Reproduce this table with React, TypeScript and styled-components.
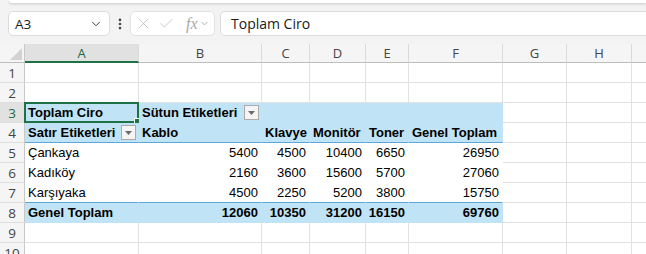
import React from 'react';
import styled, {createGlobalStyle} from 'styled-components';
import {ChevronDown, EllipsisVertical, X, Check} from 'lucide-react';

const GlobalStyle = createGlobalStyle`
  html, body {
    margin: 0;
    padding: 0;
    background: #f3f3f3;
    overflow: hidden;
  }
  body {
    font-family: "Liberation Sans", Arial, sans-serif;
  }
`;

type Cell = {
    text?: string;
    bold?: boolean;
    num?: boolean;
    filter?: boolean;
};

const COLS = ['A', 'B', 'C', 'D', 'E', 'F', 'G', 'H', 'I'];
const PIVOT_COLS = 6; // A..F

// rows 3..8 belong to the pivot table
const pivot: Record<number, { kind: 'head' | 'body' | 'total'; cells: Cell[] }> = {
    3: {kind: 'head', cells: [{text: 'Toplam Ciro', bold: true}, {text: 'Sütun Etiketleri', bold: true, filter: true}]},
    4: {
        kind: 'head', cells: [
            {text: 'Satır Etiketleri', bold: true, filter: true},
            {text: 'Kablo', bold: true},
            {text: 'Klavye', bold: true},
            {text: 'Monitör', bold: true},
            {text: 'Toner', bold: true},
            {text: 'Genel Toplam', bold: true},
        ]
    },
    5: {kind: 'body', cells: [{text: 'Çankaya'}, {text: '5400', num: true}, {text: '4500', num: true}, {text: '10400', num: true}, {text: '6650', num: true}, {text: '26950', num: true}]},
    6: {kind: 'body', cells: [{text: 'Kadıköy'}, {text: '2160', num: true}, {text: '3600', num: true}, {text: '15600', num: true}, {text: '5700', num: true}, {text: '27060', num: true}]},
    7: {kind: 'body', cells: [{text: 'Karşıyaka'}, {text: '4500', num: true}, {text: '2250', num: true}, {text: '5200', num: true}, {text: '3800', num: true}, {text: '15750', num: true}]},
    8: {kind: 'total', cells: [{text: 'Genel Toplam', bold: true}, {text: '12060', bold: true, num: true}, {text: '10350', bold: true, num: true}, {text: '31200', bold: true, num: true}, {text: '16150', bold: true, num: true}, {text: '69760', bold: true, num: true}]},
};

const App = () => {
    const rows = [1, 2, 3, 4, 5, 6, 7, 8, 9, 10];

    return (
        <Window>
            <GlobalStyle/>
            <RibbonEdge/>
            <FormulaBar>
                <NameBox>
                    <span>A3</span>
                    <ChevronDown size={14} strokeWidth={1.6} color="#333"/>
                </NameBox>
                <DotsSlot>
                    <EllipsisVertical size={14} strokeWidth={2.6} color="#444"/>
                </DotsSlot>
                <FxBox>
                    <X size={17} strokeWidth={1.1} color="#b9b9b9"/>
                    <Check size={17} strokeWidth={1.1} color="#b9b9b9"/>
                    <FxLabel>fx</FxLabel>
                    <ChevronDown size={11} strokeWidth={1.6} color="#9a9a9a"/>
                </FxBox>
                <FormulaInput>Toplam Ciro</FormulaInput>
            </FormulaBar>

            <Sheet>
                <Corner>
                    <svg width="12" height="12" viewBox="0 0 12 12">
                        <polygon points="12,0 12,12 0,12" fill="#d2d2d2"/>
                    </svg>
                </Corner>
                {COLS.map((c) => (
                    <ColHead key={c} $active={c === 'A'}>{c}</ColHead>
                ))}

                {rows.map((r) => {
                    const p = pivot[r];
                    return (
                        <React.Fragment key={r}>
                            <RowHead $active={r === 3}>{r}</RowHead>
                            {COLS.map((c, i) => {
                                const inPivot = !!p && i < PIVOT_COLS;
                                const cell = p && inPivot ? p.cells[i] : undefined;
                                return (
                                    <SheetCell
                                        key={c}
                                        $pivot={inPivot ? p.kind : undefined}
                                        $underline={inPivot && (r === 4 || r === 7)}
                                        $num={cell?.num}
                                        $bold={cell?.bold}
                                    >
                                        {cell?.text && <CellText>{cell.text}</CellText>}
                                        {cell?.filter && (
                                            <FilterButton>
                                                <svg width="7" height="4" viewBox="0 0 7 4">
                                                    <polygon points="0,0 7,0 3.5,4" fill="#6b6b6b"/>
                                                </svg>
                                            </FilterButton>
                                        )}
                                        {r === 3 && c === 'A' && (
                                            <Selection>
                                                <Handle/>
                                            </Selection>
                                        )}
                                    </SheetCell>
                                );
                            })}
                        </React.Fragment>
                    );
                })}
            </Sheet>
        </Window>
    );
};

const Window = styled.div`
    width: 646px;
    height: 254px;
    overflow: hidden;
    background: #f3f3f3;
    display: flex;
    flex-direction: column;
`;

const RibbonEdge = styled.div`
    height: 3px;
    margin-left: 9px;
    background: #ffffff;
    border-bottom-left-radius: 7px;
    box-shadow: 0 1px 3px rgba(0, 0, 0, 0.18);
    flex-shrink: 0;
`;

const FormulaBar = styled.div`
    display: flex;
    align-items: center;
    height: 25px;
    padding: 8px 0 8px 8px;
    font-family: "Open Sans", "Noto Sans", sans-serif;
`;

const NameBox = styled.div`
    width: 102px;
    height: 25px;
    box-sizing: border-box;
    background: #ffffff;
    border: 1px solid #dcdcdc;
    border-radius: 5px;
    display: flex;
    align-items: center;
    justify-content: space-between;
    padding: 0 6px 0 6px;
    font-size: 13.5px;
    color: #1b1b1b;
`;

const DotsSlot = styled.div`
    width: 20px;
    display: flex;
    justify-content: center;
`;

const FxBox = styled.div`
    width: 85px;
    height: 25px;
    box-sizing: border-box;
    background: #ffffff;
    border: 1px solid #e2e2e2;
    border-radius: 5px;
    display: flex;
    align-items: center;
    gap: 6px;
    padding: 0 3px 0 4px;
`;

const FxLabel = styled.span`
    font-family: "Liberation Serif", "DejaVu Serif", serif;
    font-style: italic;
    font-size: 16px;
    color: #a8a8a8;
    margin-left: 5px;
    margin-right: -5px;
`;

const FormulaInput = styled.div`
    flex: 1;
    height: 25px;
    margin-left: 5px;
    box-sizing: border-box;
    background: #ffffff;
    border: 1px solid #dcdcdc;
    border-right: none;
    border-radius: 5px 0 0 5px;
    display: flex;
    align-items: center;
    padding-left: 10px;
    font-size: 14px;
    color: #1b1b1b;
`;

const Sheet = styled.div`
    display: grid;
    grid-template-columns: 25px 114px 123px 48px 56px 43px 94px 64px 65px 64px;
    grid-auto-rows: 20px;
    grid-template-rows: 19px;
    background: #ffffff;
    font-family: "Liberation Sans", Arial, sans-serif;
    font-size: 13px;
    color: #000;
`;

const Corner = styled.div`
    background: #f5f5f5;
    border-right: 1px solid #c8c8c8;
    border-bottom: 1px solid #bdbdbd;
    display: flex;
    align-items: flex-end;
    justify-content: flex-end;
    padding: 0 2px 2px 0;
`;

const ColHead = styled.div<{ $active?: boolean }>`
    background: ${p => p.$active ? '#e1e1e1' : '#f5f5f5'};
    color: ${p => p.$active ? '#1e6b41' : '#444'};
    border-right: 1px solid #dadada;
    border-bottom: ${p => p.$active ? '2px solid #1e7145' : '1px solid #bdbdbd'};
    display: flex;
    align-items: center;
    justify-content: center;
    font-size: 13px;
    font-family: "Open Sans", "Noto Sans", sans-serif;
`;

const RowHead = styled.div<{ $active?: boolean }>`
    background: ${p => p.$active ? '#e1e1e1' : '#f5f5f5'};
    color: ${p => p.$active ? '#1e6b41' : '#444'};
    border-right: 1px solid #c8c8c8;
    border-bottom: 1px solid #dedede;
    display: flex;
    align-items: center;
    justify-content: center;
    font-size: 13.5px;
    font-family: "Open Sans", "Noto Sans", sans-serif;
`;

const pivotBg = {head: '#c0e4f5', body: '#ffffff', total: '#c0e4f5'};

const SheetCell = styled.div<{ $pivot?: 'head' | 'body' | 'total'; $underline?: boolean; $num?: boolean; $bold?: boolean }>`
    position: relative;
    box-sizing: border-box;
    background: ${p => p.$pivot ? pivotBg[p.$pivot] : '#ffffff'};
    border-right: 1px solid ${p => p.$pivot ? 'transparent' : '#e1e1e1'};
    border-bottom: 1px solid ${p => p.$underline ? '#5ba8da' : p.$pivot ? 'transparent' : '#e1e1e1'};
    display: flex;
    align-items: center;
    justify-content: ${p => p.$num ? 'flex-end' : 'space-between'};
    padding: 0 3px 0 3px;
    font-weight: ${p => p.$bold ? 700 : 400};
    white-space: nowrap;
    min-width: 0;
`;

const CellText = styled.span`
    line-height: 19px;
`;

const FilterButton = styled.span`
    width: 15px;
    height: 15px;
    box-sizing: border-box;
    margin-right: -1px;
    background: #f4f4f4;
    border: 1px solid #ababab;
    display: flex;
    align-items: center;
    justify-content: center;
    flex-shrink: 0;
`;

const Selection = styled.div`
    position: absolute;
    left: -1px;
    top: -1px;
    right: -1px;
    bottom: -1px;
    border: 2px solid #1e7145;
    pointer-events: none;
`;

const Handle = styled.div`
    position: absolute;
    right: -4px;
    bottom: -4px;
    width: 5px;
    height: 5px;
    background: #1e7145;
    border: 1px solid #ffffff;
`;

export default App;
